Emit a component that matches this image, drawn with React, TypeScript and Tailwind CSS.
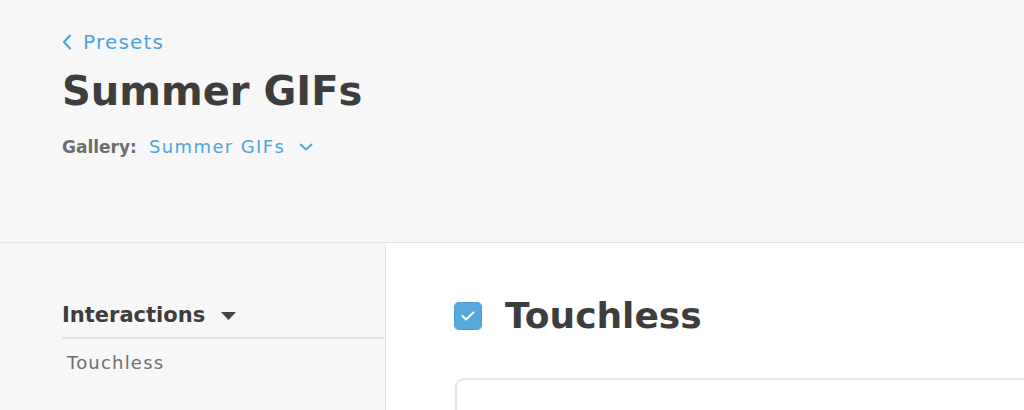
export default function App() {
  return (
    <div className="h-[410px] w-[1024px] overflow-hidden bg-white font-['DejaVu_Sans',sans-serif] text-[#3b3b3b]">
      <header className="h-[243px] border-b border-[#e2e2e2] bg-[#f7f7f7] pl-[62px] pt-[28px]">
        <a className="flex items-center text-[20px] leading-[28px] tracking-[1.2px] text-[#4ea4dc]">
          <svg width="10" height="16" viewBox="0 0 10 16" fill="none">
            <path d="M8 1.5 L2 8 L8 14.5" stroke="currentColor" strokeWidth="2.2" strokeLinecap="round" strokeLinejoin="round" />
          </svg>
          <span className="ml-[11px]">Presets</span>
        </a>
        <h1 className="mt-[11px] text-[40px] font-bold leading-[48px] text-[#3d3d3d]">
          Summer GIFs
        </h1>
        <div className="mt-[20px] flex items-center text-[17px] leading-[24px]">
          <span className="font-bold text-[#6d6d6d]">Gallery:</span>
          <span className="ml-[12px] text-[18px] tracking-[1.4px] text-[#4ea4dc]">Summer GIFs</span>
          <svg className="ml-[14px]" width="14" height="8" viewBox="0 0 14 8" fill="none">
            <path d="M1.5 1.5 L7 6.5 L12.5 1.5" stroke="#4ea4dc" strokeWidth="1.8" strokeLinecap="round" strokeLinejoin="round" />
          </svg>
        </div>
      </header>

      <div className="flex h-[167px]">
        <aside className="w-[386px] shrink-0 border-r border-[#e2e2e2] bg-[#f7f7f7] pl-[62px] pt-[58px]">
          <div className="flex items-center border-b-2 border-[#e4e4e4] pb-[8px]">
            <span className="text-[21px] font-bold leading-[28px] text-[#3d3d3d]">
              Interactions
            </span>
            <svg className="ml-[16px] mt-[2px]" width="15" height="8" viewBox="0 0 15 8">
              <path d="M0 0 H15 L7.5 8 Z" fill="#444" />
            </svg>
          </div>
          <div className="pl-[5px] pt-[11px] text-[18px] leading-[26px] tracking-[1.2px] text-[#6f6f6f]">
            Touchless
          </div>
        </aside>

        <main className="flex-1 bg-white pl-[69px] pt-[51px]">
          <div className="flex items-center">
            <span className="flex h-[26px] w-[26px] items-center justify-center rounded-[4px] bg-[#55a9dc] shadow-[0_0_0_1px_#4b9dd0]">
              <svg width="16" height="12" viewBox="0 0 16 12" fill="none">
                <path d="M2.5 6 L6 9.5 L13.5 2.5" stroke="white" strokeWidth="2" strokeLinecap="round" strokeLinejoin="round" />
              </svg>
            </span>
            <h2 className="ml-[24px] text-[36px] font-bold leading-[44px] text-[#3d3d3d]">
              Touchless
            </h2>
          </div>
          <div className="mt-[40px] h-[80px] w-[640px] rounded-[9px] border-2 border-[#e6e6e6] bg-white" />
        </main>
      </div>
    </div>
  );
}
